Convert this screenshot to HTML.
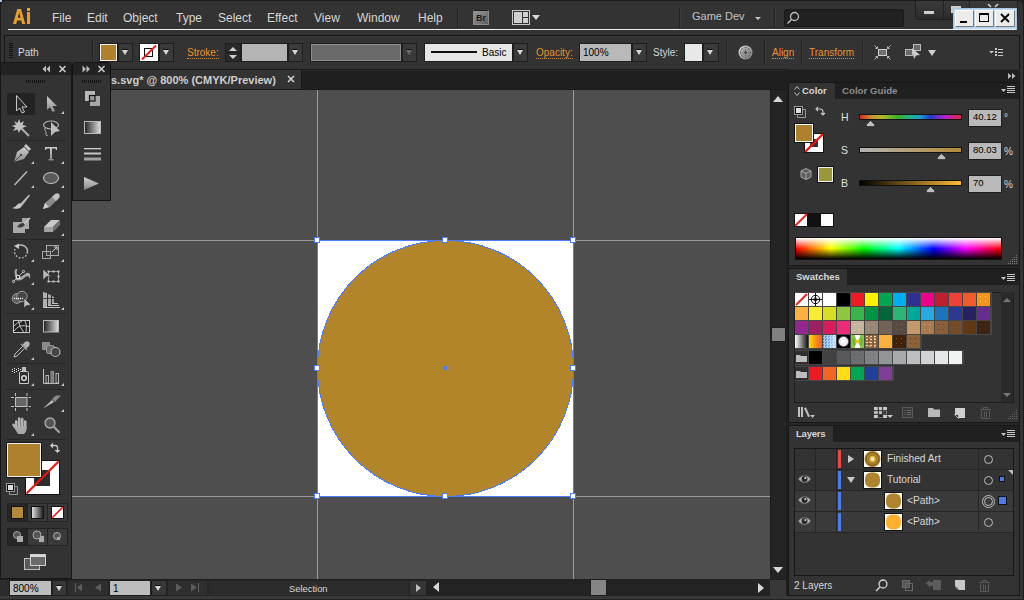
<!DOCTYPE html>
<html><head><meta charset="utf-8">
<style>
*{margin:0;padding:0;box-sizing:border-box}
html,body{width:1024px;height:600px;overflow:hidden;background:#1c1c1c;font-family:"Liberation Sans",sans-serif;font-size:12px;color:#d6d6d6}
.a{position:absolute}
.t{position:absolute;white-space:nowrap;line-height:14px}
.s10{font-size:10px}
.or{color:#e8922e}
.ul{border-bottom:1px dotted #e8922e}
.dd{position:absolute;background:#3a3a3a;border:1px solid #1e1e1e}
.dd:after{content:"";position:absolute;left:50%;top:50%;margin-left:-4px;margin-top:-3px;border-left:3.5px solid transparent;border-right:3.5px solid transparent;border-top:5px solid #d8d8d8;filter:drop-shadow(0 -1px 0 #111)}
.sd:after{margin-top:-2px}
.dis:after{border-top-color:#6a6a6a}
.tri{position:absolute;width:0;height:0;border-left:3px solid transparent;border-bottom:3px solid #cfcfcf}
svg{position:absolute;overflow:visible}
</style></head><body>
<!-- window -->
<div class="a" style="left:1px;top:1px;width:1022px;height:598px;background:#333333;border-radius:5px 5px 0 0"></div>
<div class="a" style="left:0;top:0;width:2px;height:2px;background:#9fc3e6"></div>

<!-- MENU BAR -->
<svg style="left:0;top:0" width="40" height="30"><path fill="#e89f2e" fill-rule="evenodd" d="M13 24L17.3 9H21L25.3 24H22.2L21.3 20.6H17.1L16.2 24ZM17.8 17.8H20.6L19.2 12.3Z"/><rect x="27" y="8" width="3" height="3" fill="#e89f2e"/><rect x="27" y="12" width="3" height="12" fill="#e89f2e"/></svg>
<div class="t" style="left:52px;top:11px">File</div>
<div class="t" style="left:87px;top:11px">Edit</div>
<div class="t" style="left:123px;top:11px">Object</div>
<div class="t" style="left:176px;top:11px">Type</div>
<div class="t" style="left:218px;top:11px">Select</div>
<div class="t" style="left:267px;top:11px">Effect</div>
<div class="t" style="left:314px;top:11px">View</div>
<div class="t" style="left:357px;top:11px">Window</div>
<div class="t" style="left:418px;top:11px">Help</div>
<div class="a" style="left:457px;top:8px;width:1px;height:20px;background:#222;box-shadow:1px 0 0 #3c3c3c"></div>
<div class="a" style="left:473px;top:10px;width:16px;height:15px;background:linear-gradient(135deg,#9a9a9a,#5e5e5e);border:1px solid #8a8a8a;border-top-color:#222;font-size:9px;font-weight:bold;line-height:14px;text-align:center;color:#1a1a1a">Br</div>
<div class="a" style="left:512px;top:10px;width:18px;height:15px;border:1px solid #c8c8c8;background:#333"></div>
<div class="a" style="left:514px;top:12px;width:8px;height:11px;background:#cfcfcf"></div>
<div class="a" style="left:523px;top:12px;width:5px;height:5px;background:#cfcfcf"></div>
<div class="a" style="left:523px;top:18px;width:5px;height:5px;background:#cfcfcf"></div>
<div class="a" style="left:532px;top:15px;border-left:4px solid transparent;border-right:4px solid transparent;border-top:5px solid #d8d8d8"></div>
<div class="a" style="left:679px;top:8px;width:1px;height:20px;background:#222;box-shadow:1px 0 0 #3c3c3c"></div>
<div class="t" style="left:692px;top:9px;font-size:11px;color:#c4c4c4">Game Dev</div>
<div class="a" style="left:755px;top:17px;border-left:3px solid transparent;border-right:3px solid transparent;border-top:3px solid #c8c8c8"></div>
<div class="a" style="left:774px;top:8px;width:1px;height:20px;background:#222;box-shadow:1px 0 0 #3c3c3c"></div>
<div class="a" style="left:784px;top:9px;width:120px;height:18px;background:#212121;border:1px solid #1a1a1a;border-radius:2px;box-shadow:0 1px 0 #3a3a3a"></div>
<svg style="left:786px;top:11px" width="14" height="14"><circle cx="8.5" cy="5.5" r="4" fill="none" stroke="#bdbdbd" stroke-width="1.3"/><line x1="5.5" y1="8.5" x2="1.5" y2="12.5" stroke="#bdbdbd" stroke-width="1.5"/></svg>
<div class="a" style="left:915px;top:1px;width:103px;height:19px;background:linear-gradient(#3a3a3a,#2c2c2c);border:1px solid #1e1e1e;border-top:none;border-radius:0 0 4px 4px"></div>
<div class="a" style="left:943px;top:1px;width:1px;height:18px;background:#222"></div>
<div class="a" style="left:969px;top:1px;width:1px;height:18px;background:#222"></div>
<div class="a" style="left:924px;top:11px;width:10px;height:3px;background:#cfcfcf"></div><div class="a" style="left:951px;top:6px;width:10px;height:7px;background:#cfcfcf"></div><svg style="left:987px;top:4px" width="12" height="6"><path d="M1 0L4 3M11 0L8 3" stroke="#cfcfcf" stroke-width="1.6"/></svg>
<!-- classic buttons -->
<div class="a" style="left:953px;top:8px;width:64px;height:22px;background:#bcd6ee;border:1px solid #a9c8e6"></div>
<div class="a" style="left:955px;top:10px;width:19px;height:17px;background:#ececec;border:1px solid;border-color:#fff #777 #777 #fff"></div>
<div class="a" style="left:960px;top:21px;width:7px;height:2px;background:#000"></div>
<div class="a" style="left:975px;top:10px;width:19px;height:17px;background:#ececec;border:1px solid;border-color:#fff #777 #777 #fff"></div>
<div class="a" style="left:979px;top:13px;width:10px;height:9px;border:1px solid #000;border-top-width:2px"></div>
<div class="a" style="left:995px;top:10px;width:20px;height:17px;background:#ececec;border:1px solid;border-color:#fff #777 #777 #fff"></div>
<svg style="left:1000px;top:13px" width="10" height="10"><path d="M1 1L9 9M9 1L1 9" stroke="#000" stroke-width="1.8"/></svg>
<div class="a" style="left:8px;top:29px;width:1008px;height:1px;background:#f2f2f2"></div>

<!-- CONTROL BAR -->
<div class="a" style="left:4px;top:35px;width:1016px;height:35px;background:#333;border:1px solid #161616;box-shadow:inset 0 1px 0 #3c3c3c"></div>

<div class="a" style="left:9px;top:43px;width:4px;height:16px;background:repeating-linear-gradient(#111 0 1px,#333 1px 2px)"></div>
<div class="t s10" style="left:18px;top:45.5px;color:#d8d8d8">Path</div>
<div class="a" style="left:92px;top:40px;width:1px;height:25px;background:#222;box-shadow:1px 0 0 #3a3a3a"></div>
<div class="a" style="left:99px;top:43px;width:19px;height:19px;background:#1e1e1e"></div>
<div class="a" style="left:100px;top:44px;width:17px;height:17px;background:#f0f0f0"></div>
<div class="a" style="left:101px;top:45px;width:15px;height:15px;background:#af812d"></div>
<div class="dd" style="left:118px;top:43px;width:15px;height:19px"></div>
<div class="a" style="left:139px;top:43px;width:20px;height:19px;background:#1e1e1e"></div>
<div class="a" style="left:140px;top:44px;width:18px;height:17px;background:#fff"></div>
<div class="a" style="left:144px;top:48px;width:9px;height:9px;border:1.5px solid #111"></div>
<svg style="left:140px;top:44px" width="18" height="17"><line x1="2" y1="15.5" x2="16" y2="1.5" stroke="#f01a1a" stroke-width="1.8"/></svg>
<div class="dd" style="left:159px;top:43px;width:15px;height:19px"></div>
<div class="t or s10" style="left:187px;top:45.5px"><span style="border-bottom:1px dotted #d88a2e;padding-bottom:0">Stroke:</span></div>
<div class="a" style="left:225px;top:43px;width:16px;height:19px;background:#2a2a2a;border:1px solid #1e1e1e"></div>
<div class="a" style="left:226px;top:52px;width:14px;height:1px;background:#1e1e1e"></div>
<div class="a" style="left:229px;top:47px;border-left:4px solid transparent;border-right:4px solid transparent;border-bottom:4px solid #cfcfcf"></div>
<div class="a" style="left:229px;top:55px;border-left:4px solid transparent;border-right:4px solid transparent;border-top:4px solid #cfcfcf"></div>
<div class="a" style="left:241px;top:43px;width:47px;height:19px;background:#b4b4b4;border:1px solid #1e1e1e"></div>
<div class="dd" style="left:288px;top:43px;width:15px;height:19px"></div>
<div class="a" style="left:310px;top:43px;width:92px;height:19px;background:#1e1e1e"></div>
<div class="a" style="left:311px;top:44px;width:90px;height:17px;background:#6a6a6a;border:1px solid #8e8e8e"></div>
<div class="dd dis" style="left:402px;top:43px;width:15px;height:19px;"></div>
<div class="a" style="left:424px;top:43px;width:89px;height:19px;background:#e6e6e6;border:1px solid #1e1e1e"></div>
<div class="a" style="left:431px;top:51px;width:46px;height:2px;background:#111"></div>
<div class="t s10" style="left:482px;top:45.5px;color:#000">Basic</div>
<div class="dd" style="left:513px;top:43px;width:15px;height:19px"></div>
<div class="t or s10" style="left:536px;top:45.5px"><span style="border-bottom:1px dotted #d88a2e;padding-bottom:0">Opacity:</span></div>
<div class="a" style="left:579px;top:43px;width:53px;height:19px;background:#b9b9b9;border:1px solid #1e1e1e"></div>
<div class="t s10" style="left:583px;top:45.5px;color:#000">100%</div>
<div class="dd" style="left:632px;top:43px;width:15px;height:19px"></div>
<div class="t s10" style="left:653px;top:45.5px;color:#d8d8d8">Style:</div>
<div class="a" style="left:684px;top:43px;width:19px;height:19px;background:#e8e8e8;border:1px solid #1e1e1e"></div>
<div class="dd" style="left:703px;top:43px;width:16px;height:19px"></div>
<div class="a" style="left:726px;top:40px;width:1px;height:25px;background:#222;box-shadow:1px 0 0 #3a3a3a"></div>
<svg style="left:738px;top:45px" width="15" height="15"><defs><linearGradient id="gb" x1="0" y1="0" x2="1" y2="1"><stop offset="0" stop-color="#e8e8e8"/><stop offset="1" stop-color="#777"/></linearGradient></defs><circle cx="7.5" cy="7.5" r="7" fill="url(#gb)"/><circle cx="7.5" cy="7.5" r="5" fill="none" stroke="#555" stroke-width="0.7"/><circle cx="7.5" cy="7.5" r="3" fill="none" stroke="#666" stroke-width="0.7"/><circle cx="7.5" cy="7.5" r="1.3" fill="#111"/><path d="M7.5 1V14M1 7.5H14M3 3L12 12M12 3L3 12" stroke="#666" stroke-width="0.4"/></svg>
<div class="a" style="left:764px;top:40px;width:1px;height:25px;background:#222;box-shadow:1px 0 0 #3a3a3a"></div>
<div class="t or s10" style="left:772px;top:45.5px"><span style="border-bottom:1px dotted #d88a2e;padding-bottom:0">Align</span></div>
<div class="a" style="left:801px;top:40px;width:1px;height:25px;background:#222;box-shadow:1px 0 0 #3a3a3a"></div>
<div class="t or s10" style="left:809px;top:45.5px"><span style="border-bottom:1px dotted #d88a2e;padding-bottom:0">Transform</span></div>
<div class="a" style="left:862px;top:40px;width:1px;height:25px;background:#222;box-shadow:1px 0 0 #3a3a3a"></div>
<svg style="left:874px;top:45px" width="17" height="15"><rect x="4.5" y="4.5" width="8" height="6" fill="#707070" stroke="#d0d0d0"/><g stroke="#c8c8c8" stroke-width="0.9" fill="none"><path d="M0.5 0.5L3.5 3.5M16.5 0.5L13.5 3.5M0.5 14.5L3.5 11.5M16.5 14.5L13.5 11.5"/><path d="M1.5 3.5H3.5V1.5M15.5 3.5H13.5V1.5M1.5 11.5H3.5V13.5M15.5 11.5H13.5V13.5"/></g></svg>
<svg style="left:905px;top:44px" width="18" height="16"><rect x="0.5" y="5.5" width="7" height="6" fill="#6a6a6a" stroke="#bbb"/><rect x="8.5" y="0.5" width="7" height="6" fill="#6a6a6a" stroke="#bbb"/><path d="M7 4L15 11L11 11.5L9 15Z" fill="#cfcfcf"/></svg>
<div class="a" style="left:928px;top:50px;border-left:4px solid transparent;border-right:4px solid transparent;border-top:6px solid #d0d0d0"></div>
<svg style="left:989px;top:47px" width="15" height="10"><path d="M0 4H5L2.5 6.5Z" fill="#c8c8c8"/><path d="M6 1H8V3H6ZM6 4H8V6H6ZM6 7H8V9H6Z" fill="#c8c8c8"/><path d="M9 2.5H14M9 5.5H14M9 8.5H14" stroke="#c8c8c8" stroke-width="1"/></svg>

<!-- DOC TAB STRIP -->
<div class="a" style="left:72px;top:70px;width:715px;height:20px;background:#1f1f1f;border-top:1px solid #2c2c2c;border-bottom:1px solid #191919"></div>
<div class="a" style="left:72px;top:70px;width:230px;height:19px;background:#333;border-right:1px solid #1a1a1a;box-shadow:inset 0 1px 0 #3c3c3c"></div>
<div class="t" style="left:111px;top:73px;font-size:11px;font-weight:bold;color:#cfcfcf">s.svg* @ 800% (CMYK/Preview)</div>
<svg style="left:287px;top:75px" width="8" height="8"><path d="M1 1L7 7M7 1L1 7" stroke="#d0d0d0" stroke-width="1.6"/></svg>

<!-- CANVAS -->
<div class="a" style="left:72px;top:90px;width:698px;height:489px;background:#4e4e4e"></div>
<div class="a" style="left:317px;top:90px;width:1px;height:489px;background:#9a9a9a"></div>
<div class="a" style="left:573px;top:90px;width:1px;height:489px;background:#9a9a9a"></div>
<div class="a" style="left:72px;top:240px;width:698px;height:1px;background:#9a9a9a"></div>
<div class="a" style="left:72px;top:496px;width:698px;height:1px;background:#9a9a9a"></div>
<div class="a" style="left:318px;top:241px;width:255px;height:255px;background:#fff"></div>
<svg style="left:0;top:0" width="1024" height="600">
<circle cx="445.5" cy="368.5" r="128" fill="#b2852b" stroke="#4a7cff" stroke-width="1" shape-rendering="crispEdges"/>
<rect x="317.5" y="240.5" width="256" height="256" fill="none" stroke="#4a7cff" stroke-width="1"/>
<g fill="#fff" stroke="#4a7cff" stroke-width="1">
<rect x="314.5" y="237.5" width="5" height="5"/><rect x="442.5" y="237.5" width="5" height="5"/><rect x="570.5" y="237.5" width="5" height="5"/>
<rect x="314.5" y="365.5" width="5" height="5"/><rect x="570.5" y="365.5" width="5" height="5"/>
<rect x="314.5" y="493.5" width="5" height="5"/><rect x="442.5" y="493.5" width="5" height="5"/><rect x="570.5" y="493.5" width="5" height="5"/>
</g>
<rect x="443" y="366" width="4" height="4" fill="#4a7cff"/>
</svg>

<!-- V SCROLLBAR -->
<div class="a" style="left:770px;top:90px;width:17px;height:489px;background:#242424;border-left:1px solid #1b1b1b;border-right:1px solid #1b1b1b"></div>
<div class="a" style="left:773px;top:96px;border-left:5px solid transparent;border-right:5px solid transparent;border-bottom:6px solid #d8d8d8"></div>
<div class="a" style="left:771px;top:327px;width:15px;height:15px;background:#808080;border:1px solid #1c1c1c"></div>
<div class="a" style="left:773px;top:567px;border-left:5px solid transparent;border-right:5px solid transparent;border-top:6px solid #d8d8d8"></div>
<div class="a" style="left:770px;top:579px;width:16px;height:17px;background:#383838;border-top:1px solid #1e1e1e"></div>
<div class="a" style="left:786px;top:69px;width:2px;height:527px;background:#1e1e1e"></div>

<!-- STATUS BAR -->
<div class="a" style="left:0px;top:579px;width:786px;height:17px;background:#2c2c2c;border-top:1px solid #1e1e1e"></div>
<div class="a" style="left:0px;top:596px;width:1023px;height:4px;background:#393939"></div>
<div class="a" style="left:0px;top:599px;width:1024px;height:1px;background:#222"></div>
<div class="a" style="left:9px;top:580px;width:43px;height:16px;background:#bdbdbd;border:1px solid #1e1e1e"></div>
<div class="t s10" style="left:13px;top:582px;font-size:10px;color:#000">800%</div>
<div class="dd sd" style="left:52px;top:580px;width:15px;height:16px;background:#383838"></div>
<div class="a" style="left:67px;top:580px;width:42px;height:16px;background:#2e2e2e;border:1px solid #262626"></div>
<svg style="left:75px;top:583px" width="30" height="10"><path d="M0.5 0V9" stroke="#5c5c5c" stroke-width="1.2"/><path d="M7 0.5L2 4.5L7 8.5Z" fill="#5c5c5c"/><path d="M26 0.5L20 4.5L26 8.5Z" fill="#5c5c5c"/></svg>
<div class="a" style="left:109px;top:580px;width:42px;height:16px;background:#bdbdbd;border:1px solid #1e1e1e"></div>
<div class="t s10" style="left:113px;top:582px;font-size:10px;color:#000">1</div>
<div class="dd sd" style="left:151px;top:580px;width:16px;height:16px;background:#383838"></div>
<div class="a" style="left:167px;top:580px;width:41px;height:16px;background:#2e2e2e;border:1px solid #262626"></div>
<svg style="left:175px;top:583px" width="30" height="10"><path d="M1 0.5L7 4.5L1 8.5Z" fill="#5c5c5c"/><path d="M16 0.5L22 4.5L16 8.5Z" fill="#5c5c5c"/><path d="M23.5 0V9" stroke="#5c5c5c" stroke-width="1.2"/></svg>
<div class="a" style="left:208px;top:580px;width:201px;height:16px;background:#2c2c2c;border:1px solid #262626"></div>
<div class="t s10" style="left:289px;top:582px;font-size:9.4px;color:#d8d8d8">Selection</div>
<div class="a" style="left:409px;top:580px;width:18px;height:16px;background:#353535;border:1px solid #232323"></div>
<div class="a" style="left:416px;top:584px;border-top:4px solid transparent;border-bottom:4px solid transparent;border-left:5px solid #bdbdbd"></div>
<div class="a" style="left:427px;top:579px;width:343px;height:17px;background:#232323"></div>
<div class="a" style="left:433px;top:582px;border-top:5px solid transparent;border-bottom:5px solid transparent;border-right:6px solid #d8d8d8"></div>
<div class="a" style="left:758px;top:583px;border-top:5px solid transparent;border-bottom:5px solid transparent;border-left:6px solid #d8d8d8"></div>
<div class="a" style="left:590px;top:579px;width:17px;height:17px;background:#858585;border:1px solid #1c1c1c"></div>
<div class="a" style="left:770px;top:580px;width:16px;height:16px;background:#383838"></div>

<!-- LEFT TOOLBAR -->
<div class="a" style="left:0px;top:62px;width:72px;height:517px;background:#333333;border:1px solid #161616;border-radius:3px 3px 0 0"></div>
<div class="a" style="left:1px;top:63px;width:70px;height:12px;background:#222;border-radius:3px 3px 0 0"></div>
<svg style="left:42px;top:65px" width="28" height="8"><path d="M4 0.5L0.5 4L4 7.5ZM8 0.5L4.5 4L8 7.5Z" fill="#bbb"/><path d="M17.5 1L23.5 7M23.5 1L17.5 7" stroke="#cfcfcf" stroke-width="1.5"/></svg>
<div class="a" style="left:26px;top:80px;width:20px;height:3px;background:repeating-linear-gradient(90deg,#111 0 1px,#333 1px 2px)"></div>

<!-- FLOAT PANEL -->
<div class="a" style="left:72px;top:62px;width:39px;height:139px;background:#333333;border:1px solid #141414;border-radius:3px 3px 0 0"></div>
<div class="a" style="left:73px;top:63px;width:37px;height:12px;background:#222;border-radius:3px 3px 0 0"></div>
<svg style="left:82px;top:65px" width="26" height="8"><path d="M0.5 0.5L4 4L0.5 7.5ZM4.5 0.5L8 4L4.5 7.5Z" fill="#bbb"/><path d="M16.5 1L22.5 7M22.5 1L16.5 7" stroke="#cfcfcf" stroke-width="1.5"/></svg>
<div class="a" style="left:82px;top:80px;width:20px;height:3px;background:repeating-linear-gradient(90deg,#111 0 1px,#333 1px 2px)"></div>


<!-- TOOL ICONS -->
<div class="a" style="left:7px;top:93px;width:28px;height:22px;background:#232323"></div>
<svg style="left:0;top:0" width="72" height="600">
<defs>
<linearGradient id="lg1" x1="0" y1="0" x2="0" y2="1"><stop offset="0" stop-color="#d0d0d0"/><stop offset="1" stop-color="#8a8a8a"/></linearGradient>
<linearGradient id="lg2" x1="0" y1="0" x2="1" y2="0"><stop offset="0" stop-color="#222"/><stop offset="1" stop-color="#e0e0e0"/></linearGradient>
</defs>
<g fill="#c8c8c8">
<!-- sub triangles -->
<path d="M61 114H64V111Z"/>
<path d="M31 164H34V161Z"/><path d="M61 164H64V161Z"/>
<path d="M31 188H34V185Z"/><path d="M61 188H64V185Z"/>
<path d="M61 212H64V209Z"/><path d="M61 236H64V233Z"/>
<path d="M31 262H34V259Z"/><path d="M61 262H64V259Z"/>
<path d="M31 285H34V282Z"/>
<path d="M31 310H34V307Z"/><path d="M61 310H64V307Z"/>
<path d="M31 360H34V357Z"/>
<path d="M31 386H34V383Z"/><path d="M61 386H64V383Z"/>
<path d="M61 412H64V409Z"/>
<path d="M31 436H34V433Z"/>
</g>
<!-- separators -->
<g fill="#262626"><rect x="6" y="140" width="60" height="1"/><rect x="6" y="239" width="60" height="1"/><rect x="6" y="313" width="60" height="1"/><rect x="6" y="363" width="60" height="1"/><rect x="6" y="389" width="60" height="1"/><rect x="6" y="439" width="60" height="1"/></g>
<!-- selection -->
<path d="M16.5 95.5V111L19.5 108L22 113L24.5 112L22 107H27Z" fill="#2a2a2a" stroke="#c8c8c8" stroke-width="1"/>
<!-- direct selection -->
<path d="M47 96V110L50 107L52.5 112L55 111L52.5 106H57Z" fill="url(#lg1)"/>
<!-- magic wand -->
<path d="M19 119L20.5 123L24 121L22.5 125L27 126L22.5 128L24 131L20.5 129.5L19 133L17.5 129.5L13 131L15.5 127.5L12 126L16 124.5L14 121L17.5 123Z" fill="#c0c0c0"/>
<path d="M21 128L29 136" stroke="#b0b0b0" stroke-width="2"/>
<!-- lasso -->
<ellipse cx="51" cy="125" rx="7.5" ry="4" fill="none" stroke="#b0b0b0" stroke-width="1.2"/>
<path d="M45 128C44 131 47 132 46 134C45 135.5 47 136 48 135" fill="none" stroke="#b0b0b0" stroke-width="1"/>
<path d="M51 122V136L55 132L60 131Z" fill="#bdbdbd"/>
<!-- pen -->
<path d="M14 162L17 152L24 147L29 152L24 159Z" fill="url(#lg1)"/>
<path d="M24 146L26 144L31 149L29 151Z" fill="#c8c8c8"/>
<circle cx="21" cy="155" r="1" fill="#222"/><path d="M14 162L20.5 155.5" stroke="#333" stroke-width="0.8"/>
<!-- type -->
<path d="M45 147H57V150H56L55.5 148.5H52V159H53.5V160.5H48.5V159H50V148.5H46.5L46 150H45Z" fill="url(#lg1)"/>
<!-- line -->
<path d="M14.5 185L27 171.5" stroke="#c0c0c0" stroke-width="1.3"/>
<!-- ellipse -->
<ellipse cx="51" cy="178" rx="7.5" ry="5.5" fill="#5a5a5a" stroke="#c0c0c0" stroke-width="1.1"/>
<!-- brush -->
<path d="M20 204L29 194.5L30 195.5L22 206Z" fill="#b8b8b8"/>
<path d="M12 208C15 208 17 204 20 203L22 206C20 209 15 209.5 12 208Z" fill="#c8c8c8"/>
<!-- pencil -->
<path d="M43 209L45 203L54 195L58 199L50 207Z" fill="#8a8a8a"/>
<path d="M52 197L55 194C56 193 58 193 59 194C60 195 60 197 59 198L56 201Z" fill="#c0c0c0"/>
<path d="M43 209L45 203L49 207Z" fill="#d0d0d0"/>
<!-- blob brush -->
<path d="M13 222H22V218H29V229L25 229V233H13Z" fill="#a8a8a8"/>
<path d="M17 227C20 223 23 222 25 224C24 227 21 228 17 227Z" fill="#3a3a3a"/>
<path d="M24 224L30 218" stroke="#c8c8c8" stroke-width="1.5"/>
<!-- eraser -->
<path d="M44 227L51 220H60L53 227Z" fill="#c8c8c8"/>
<path d="M44 227H53V232H44Z" fill="#a0a0a0"/>
<path d="M53 227L60 220V225L53 232Z" fill="#707070"/>
<!-- rotate -->
<path d="M17 246.5A6.5 6.5 0 0 1 27.5 252" fill="none" stroke="#b8b8b8" stroke-width="1.5"/>
<path d="M27.5 252A6.5 6.5 0 1 1 15 249" fill="none" stroke="#b0b0b0" stroke-width="1.5" stroke-dasharray="1.8 1.6"/>
<path d="M14 246L19 243.5V249Z" fill="#c8c8c8"/>
<!-- scale -->
<rect x="46.5" y="245.5" width="12" height="10" fill="#3a3a3a" stroke="#a8a8a8"/>
<rect x="42.5" y="251.5" width="8" height="7" fill="none" stroke="#a8a8a8"/>
<path d="M52 252L57 247M54 247H57V250" stroke="#d0d0d0" fill="none"/>
<!-- puppet warp -->
<path d="M14.5 271.5Q15 268 17.5 269.5Q16 271 17 274Q18 277 20 277Q23 276 25 274Q28 271.5 30 274Q30.5 276 30 279Q29 276 27 276Q25 277 23 279Q20 281 17 280.5Q15 279 14.5 271.5Z" fill="#a8a8a8"/>
<path d="M13.5 281.5L23.5 271.5" stroke="#d0d0d0" stroke-width="0.9"/>
<circle cx="18" cy="277" r="1.7" fill="#333" stroke="#e0e0e0" stroke-width="1.1"/>
<circle cx="13.5" cy="281.5" r="1.1" fill="#333" stroke="#d8d8d8" stroke-width="0.9"/>
<circle cx="23.5" cy="271.5" r="1.1" fill="#333" stroke="#d8d8d8" stroke-width="0.9"/>
<!-- free transform -->
<rect x="48.5" y="271.5" width="10" height="10" fill="none" stroke="#b8b8b8" stroke-width="0.8"/>
<g fill="#c8c8c8"><rect x="47.5" y="270.5" width="2" height="2"/><rect x="52.5" y="270.5" width="2" height="2"/><rect x="57.5" y="270.5" width="2" height="2"/><rect x="57.5" y="275.5" width="2" height="2"/><rect x="47.5" y="280.5" width="2" height="2"/><rect x="52.5" y="280.5" width="2" height="2"/><rect x="57.5" y="280.5" width="2" height="2"/></g>
<path d="M43 269V280L46.5 276.5L51 276.5Z" fill="#b8b8b8" stroke="#222" stroke-width="0.5"/>
<!-- shape builder -->
<circle cx="17" cy="298.5" r="4.8" fill="#5a5a5a" stroke="#a8a8a8"/>
<circle cx="22" cy="296.5" r="5.2" fill="#474747" stroke="#a0a0a0"/>
<g fill="#f0f0f0"><circle cx="14.5" cy="298.5" r="0.75"/><circle cx="16.5" cy="298.5" r="0.75"/><circle cx="18.5" cy="298.5" r="0.75"/><circle cx="20.5" cy="298.5" r="0.75"/><circle cx="22.5" cy="298.5" r="0.75"/></g>
<path d="M24 298V308L26.5 305.5L31 305Z" fill="#c0c0c0" stroke="#222" stroke-width="0.5"/>
<!-- perspective grid -->
<path d="M43 292L47 293V308H43Z" fill="#b0b0b0"/><path d="M48 294L51 295V305H48Z" fill="#a8a8a8"/><path d="M52 296L54 297V303H52Z" fill="#a0a0a0"/>
<path d="M43 298.5H55" stroke="#2a2a2a" stroke-width="0.8"/>
<path d="M52 303.5H58M48 305.5H59M43 307.5H60" stroke="#c0c0c0" stroke-width="1"/>
<!-- mesh -->
<rect x="13.5" y="320.5" width="16" height="12" fill="#222" stroke="#c8c8c8"/>
<path d="M14 326Q17 322 22 321.5M14 331Q17 327 20 326Q24 325 29 326.5M18.5 321Q19 326 23.5 332M25 321Q27.5 325 26 332" fill="none" stroke="#d0d0d0" stroke-width="0.9"/>
<!-- gradient -->
<rect x="43.5" y="320.5" width="15" height="11.5" fill="url(#lg2)" stroke="#b8b8b8"/>
<!-- eyedropper -->
<path d="M14 357L15 354L23 346L25 348L17 356Z" fill="none" stroke="#c0c0c0" stroke-width="1"/>
<path d="M22 345L25 342C26 341 28 341 29 342C30 343 30 345 29 346L26 349Z" fill="#b0b0b0"/>
<path d="M21 344L27 350" stroke="#909090" stroke-width="1.5"/>
<!-- blend -->
<rect x="42" y="342" width="8" height="8" fill="#8a8a8a"/>
<rect x="46.5" y="345.5" width="8" height="8" rx="2" fill="#666" stroke="#a0a0a0"/>
<circle cx="55.5" cy="352" r="4.5" fill="#444" stroke="#b8b8b8" stroke-width="1.1"/>
<!-- symbol sprayer -->
<g fill="#e8e8e8"><rect x="14" y="368" width="1" height="1"/><rect x="18" y="368" width="1" height="1"/><rect x="12" y="369" width="1" height="1"/><rect x="16" y="369" width="1" height="1"/><rect x="20" y="369" width="1" height="1"/><rect x="14" y="370" width="1" height="1"/><rect x="18" y="370" width="1" height="1"/><rect x="12" y="371" width="1" height="1"/><rect x="16" y="371" width="1" height="1"/><rect x="14" y="372" width="1" height="1"/></g>
<rect x="22" y="367" width="4" height="4" fill="#c0c0c0"/>
<path d="M19.5 383.5V373Q19.5 372 20.5 371.5H27.5Q28.5 372 28.5 373V383.5Z" fill="#2e2e2e" stroke="#c8c8c8"/>
<circle cx="24" cy="378" r="2.3" fill="#222" stroke="#d8d8d8" stroke-width="1.5"/>
<!-- graph -->
<path d="M43.5 369V383.5H59" fill="none" stroke="#c0c0c0"/>
<rect x="46" y="375.5" width="2.5" height="7.5" fill="none" stroke="#c0c0c0" stroke-width="0.9"/>
<rect x="51" y="371.5" width="2.5" height="11.5" fill="#777" stroke="#999" stroke-width="0.9"/>
<rect x="56" y="373.5" width="2.5" height="9.5" fill="none" stroke="#c0c0c0" stroke-width="0.9"/>
<!-- artboard -->
<rect x="15.5" y="397.5" width="11.5" height="9" fill="#666" stroke="#c0c0c0"/>
<path d="M15.5 393V396M27 393V396M15.5 408V411M27 408V411M11 397.5H14M28.5 397.5H31M11 406.5H14M28.5 406.5H31" stroke="#c0c0c0"/>
<!-- slice -->
<path d="M43 408.5L52 400L54 402Z" fill="#c0c0c0"/>
<path d="M52 399L56 395.5H61L55 402Z" fill="#8a8a8a"/>
<!-- hand -->
<g stroke="#b4b4b4" stroke-width="2.6" stroke-linecap="round"><path d="M16.2 427V421.5M19.2 427V418.5M22.2 427V419M25.2 428V421.5M13.5 425L17 429.5"/></g>
<path d="M15 426H26.5V429C26.5 431.5 25 433 24 434H18L15.5 430Z" fill="#a8a8a8"/>
<!-- zoom -->
<circle cx="50" cy="423" r="5" fill="#555" stroke="#b0b0b0" stroke-width="1.3"/>
<path d="M54 427L59 432" stroke="#a0a0a0" stroke-width="2.2" stroke-linecap="round"/>
<!-- fill/stroke -->
<rect x="25" y="460" width="35" height="35" fill="#111"/>
<rect x="26" y="461" width="33" height="33" fill="#fff"/>
<rect x="34" y="470" width="16" height="16" fill="#2c2c2c"/>
<line x1="26.5" y1="493.5" x2="58.5" y2="461.5" stroke="#f01010" stroke-width="2.2"/>
<rect x="6" y="442" width="36" height="36" fill="#111"/>
<rect x="7" y="443" width="34" height="34" fill="#f2f2f2"/>
<rect x="8" y="444" width="32" height="32" fill="#ad812e"/>
<path d="M51 445.5H55.5Q57.5 445.5 57.5 447.5V451" fill="none" stroke="#c8c8c8" stroke-width="1.3"/><path d="M50 445.5L53 442.5V448.5Z M57.5 453L54.5 450H60.5Z" fill="#c8c8c8"/>
<rect x="6.5" y="483.5" width="8" height="8" fill="#111" stroke="#9a9a9a"/><rect x="8" y="485" width="5" height="5" fill="#ddd"/><path d="M9.5 492V494.5H17.5V486.5H15" fill="none" stroke="#9a9a9a"/>
<!-- mode buttons -->
<rect x="7" y="503" width="61" height="19" fill="#222"/>
<rect x="8" y="504" width="19" height="17" fill="#262626"/>
<rect x="28" y="504" width="19" height="17" fill="#3a3a3a"/>
<rect x="48" y="504" width="19" height="17" fill="#3a3a3a"/>
<rect x="11" y="506" width="13" height="13" fill="#111"/><rect x="12" y="507" width="11" height="11" fill="#b38a3c"/>
<rect x="31" y="506" width="13" height="13" fill="#111"/><rect x="32" y="507" width="11" height="11" fill="url(#lg2)" transform="rotate(180 37.5 512.5)"/>
<rect x="51" y="506" width="13" height="13" fill="#111"/><rect x="52" y="507" width="11" height="11" fill="#fff"/><line x1="52" y1="518" x2="63" y2="507" stroke="#f01010" stroke-width="1.6"/>
<rect x="7" y="528" width="61" height="18" fill="#222"/>
<rect x="8" y="529" width="19" height="16" fill="#262626"/>
<rect x="28" y="529" width="19" height="16" fill="#3a3a3a"/>
<rect x="48" y="529" width="19" height="16" fill="#3a3a3a"/>
<circle cx="17" cy="535" r="3.5" fill="#555" stroke="#aaa"/><rect x="17" y="536" width="6" height="6" fill="#aaa"/>
<rect x="39" y="536" width="5" height="6" fill="#aaa"/><circle cx="37" cy="535" r="4" fill="#555" stroke="#aaa"/>
<circle cx="57" cy="536" r="3.5" fill="#555" stroke="#aaa"/><rect x="57" y="537" width="3" height="3" fill="#aaa"/>
<!-- screen mode -->
<rect x="24.5" y="458.5" width="0" height="0"/>
<rect x="24.5" y="558.5" width="15" height="11" fill="#5a5a5a" stroke="#c0c0c0"/>
<rect x="30.5" y="554.5" width="15" height="11" fill="#6a6a6a" stroke="#d0d0d0"/>
<rect x="31" y="555" width="14" height="2" fill="#d8d8d8"/>
</svg>
<!-- float panel icons -->
<svg style="left:73px;top:62px" width="38" height="139">
<rect x="12" y="29" width="10" height="10" fill="#b8b8b8"/><rect x="17" y="34" width="10" height="10" fill="#a8a8a8"/><rect x="16.5" y="33.5" width="5.5" height="5.5" fill="#999" stroke="#141414" stroke-width="1.2"/>
<rect x="11.5" y="59.5" width="16" height="12" fill="url(#lg2)" stroke="#b8b8b8"/>
<rect x="11" y="86" width="17" height="1.3" fill="#d0d0d0"/><rect x="11" y="90.5" width="17" height="2" fill="#c8c8c8"/><rect x="11" y="95.5" width="17" height="3" fill="#a0a0a0"/>
<path d="M11 115V128L26 121.5Z" fill="url(#lg1)"/>
</svg>

<!-- DOCK -->
<div class="a" style="left:788px;top:69px;width:232px;height:13px;background:#1f1f1f;border-top:1px solid #2a2a2a"></div>
<svg style="left:1008px;top:73px" width="8" height="6"><path d="M0 0L3.5 3L0 6ZM4 0L7.5 3L4 6Z" fill="#bbb"/></svg>
<!-- color panel -->
<div class="a" style="left:788px;top:82px;width:232px;height:184px;background:#333333;border:1px solid #171717"></div>
<div class="a" style="left:789px;top:83px;width:230px;height:16px;background:#202020"></div>
<div class="a" style="left:789px;top:83px;width:46px;height:16px;background:#333333"></div>
<div class="a" style="left:835px;top:83px;width:1px;height:16px;background:#1e1e1e"></div>
<div class="a" style="left:905px;top:83px;width:1px;height:16px;background:#1e1e1e"></div>
<svg style="left:794px;top:85px" width="6" height="12"><path d="M0.5 4.5L3 1.5L5.5 4.5M0.5 7.5L3 10.5L5.5 7.5" fill="none" stroke="#bbb" stroke-width="1"/></svg>
<div class="t" style="left:802px;top:84px;font-size:9.5px;font-weight:bold;color:#d8d8d8">Color</div>
<div class="t" style="left:842px;top:84px;font-size:9.7px;font-weight:bold;color:#8c8c8c">Color Guide</div>
<svg style="left:1001px;top:86px" width="15" height="10"><path d="M0 3H5L2.5 6Z" fill="#c8c8c8"/><path d="M6 0.5H14M6 2.5H14M6 4.5H14M6 6.5H14" stroke="#c8c8c8" stroke-width="1"/></svg>
<!-- color panel content -->
<svg style="left:790px;top:100px" width="40" height="20"><rect x="4.5" y="6.5" width="8" height="8" fill="#111" stroke="#9a9a9a"/><rect x="6" y="8" width="5" height="5" fill="#ddd"/><path d="M7.5 15V17.5H15.5V9.5H13" fill="none" stroke="#9a9a9a"/><path d="M26 9H30Q33 9 33 12V15M28 7L26 9L28 11M31 13L33 15L35 13" fill="none" stroke="#c8c8c8" stroke-width="1.1"/></svg>
<div class="a" style="left:804px;top:133px;width:20px;height:20px;background:#fff;border:1px solid #111"></div>
<div class="a" style="left:810px;top:139px;width:8px;height:8px;background:#333"></div>
<svg style="left:805px;top:134px" width="18" height="18"><line x1="0" y1="18" x2="18" y2="0" stroke="#ff0a0a" stroke-width="2.2"/></svg>
<div class="a" style="left:794px;top:123px;width:20px;height:20px;background:#fff;border:1px solid #111"></div>
<div class="a" style="left:796px;top:125px;width:16px;height:16px;background:#af812d"></div>
<svg style="left:800px;top:168px" width="12" height="12"><path d="M6 0.5L11 3V9L6 11.5L1 9V3Z" fill="#5a5a5a" stroke="#aaa"/><path d="M1 3L6 5.5L11 3M6 5.5V11.5" fill="none" stroke="#aaa"/></svg>
<div class="a" style="left:818px;top:167px;width:15px;height:15px;background:#9b9738;border:1px solid #f0f0f0;box-shadow:0 0 0 1px #111"></div>
<div class="a" style="left:794px;top:213px;width:40px;height:14px;background:#111"></div>
<div class="a" style="left:795px;top:214px;width:12px;height:12px;background:#fff"></div>
<svg style="left:795px;top:214px" width="12" height="12"><line x1="0" y1="12" x2="12" y2="0" stroke="#f01a1a" stroke-width="1.8"/></svg>
<div class="a" style="left:821px;top:214px;width:12px;height:12px;background:#fff"></div>
<div class="t" style="left:841px;top:110px;font-size:10.5px;color:#e0e0e0">H</div>
<div class="t" style="left:841px;top:143px;font-size:10.5px;color:#e0e0e0">S</div>
<div class="t" style="left:841px;top:176px;font-size:10.5px;color:#e0e0e0">B</div>
<div class="a" style="left:859px;top:114px;width:103px;height:6px;background:#111"></div>
<div class="a" style="left:860px;top:115px;width:101px;height:4px;background:linear-gradient(90deg,#d82a2a,#c8962e 12%,#b0b828 22%,#38b030 38%,#20b0a0 52%,#2098d0 60%,#2238c8 70%,#7830c8 78%,#c020c0 86%,#d82a3a)"></div>
<div class="a" style="left:859px;top:147px;width:103px;height:6px;background:#111"></div>
<div class="a" style="left:860px;top:148px;width:101px;height:4px;background:linear-gradient(90deg,#b3b3b3,#b38a38)"></div>
<div class="a" style="left:859px;top:180px;width:103px;height:6px;background:#111"></div>
<div class="a" style="left:860px;top:181px;width:101px;height:4px;background:linear-gradient(90deg,#000,#ffba3a)"></div>
<svg style="left:866px;top:120px" width="9" height="7"><path d="M0.5 6.5V4.5L4.5 0.5L8.5 4.5V6.5Z" fill="#bdbdbd" stroke="#222" stroke-width="0.6"/></svg>
<svg style="left:937px;top:153px" width="9" height="7"><path d="M0.5 6.5V4.5L4.5 0.5L8.5 4.5V6.5Z" fill="#bdbdbd" stroke="#222" stroke-width="0.6"/></svg>
<svg style="left:926px;top:186px" width="9" height="7"><path d="M0.5 6.5V4.5L4.5 0.5L8.5 4.5V6.5Z" fill="#bdbdbd" stroke="#222" stroke-width="0.6"/></svg>
<div class="a" style="left:968px;top:109px;width:34px;height:18px;background:#b9b9b9;border:1px solid #1e1e1e"></div>
<div class="a" style="left:968px;top:142px;width:34px;height:18px;background:#b9b9b9;border:1px solid #1e1e1e"></div>
<div class="a" style="left:968px;top:175px;width:34px;height:18px;background:#b9b9b9;border:1px solid #1e1e1e"></div>
<div class="t" style="left:973px;top:110px;font-size:9.5px;color:#000">40.12</div>
<div class="t" style="left:973px;top:143px;font-size:9.5px;color:#000">80.03</div>
<div class="t" style="left:973px;top:176px;font-size:9.5px;color:#000">70</div>
<div class="t" style="left:1004px;top:111px;font-size:10px;color:#d8d8d8">&deg;</div>
<div class="t" style="left:1004px;top:144.5px;font-size:10px;color:#d8d8d8">%</div>
<div class="t" style="left:1004px;top:177.5px;font-size:10px;color:#d8d8d8">%</div>
<div class="a" style="left:795px;top:237px;width:207px;height:23px;background:#111"></div>
<div class="a" style="left:796px;top:238px;width:205px;height:21px;background:linear-gradient(180deg,rgba(255,255,255,1) 0%,rgba(255,255,255,0) 50%,rgba(0,0,0,0) 50%,rgba(0,0,0,1) 100%),linear-gradient(90deg,#f00,#ff0 17%,#0f0 33%,#0ff 50%,#00f 67%,#f0f 83%,#f00)"></div>
<svg style="left:1008px;top:255px" width="10" height="10"><g fill="#777"><rect x="8" y="0" width="1" height="1"/><rect x="6" y="2" width="1" height="1"/><rect x="8" y="2" width="1" height="1"/><rect x="4" y="4" width="1" height="1"/><rect x="6" y="4" width="1" height="1"/><rect x="8" y="4" width="1" height="1"/><rect x="2" y="6" width="1" height="1"/><rect x="4" y="6" width="1" height="1"/><rect x="6" y="6" width="1" height="1"/><rect x="8" y="6" width="1" height="1"/><rect x="0" y="8" width="1" height="1"/><rect x="2" y="8" width="1" height="1"/><rect x="4" y="8" width="1" height="1"/><rect x="6" y="8" width="1" height="1"/><rect x="8" y="8" width="1" height="1"/></g></svg>

<!-- swatches panel -->
<div class="a" style="left:788px;top:266px;width:232px;height:2px;background:#262626"></div>
<div class="a" style="left:788px;top:268px;width:232px;height:155px;background:#333333;border:1px solid #171717"></div>
<div class="a" style="left:789px;top:269px;width:230px;height:16px;background:#202020"></div>
<div class="a" style="left:789px;top:269px;width:58px;height:16px;background:#333333"></div>
<div class="a" style="left:847px;top:269px;width:1px;height:16px;background:#1e1e1e"></div>
<div class="t" style="left:796px;top:270px;font-size:9.5px;font-weight:bold;color:#d8d8d8">Swatches</div>
<svg style="left:1001px;top:274px" width="15" height="10"><path d="M0 3H5L2.5 6Z" fill="#c8c8c8"/><path d="M6 0.5H14M6 2.5H14M6 4.5H14M6 6.5H14" stroke="#c8c8c8" stroke-width="1"/></svg>
<div class="a" style="left:794px;top:292px;width:220px;height:111px;background:#333;border:1px solid #1e1e1e"></div>
<div class="a" style="left:1001px;top:292px;width:12px;height:110px;background:#2a2a2a"></div>
<div class="a" style="left:1003px;top:298px;border-left:4px solid transparent;border-right:4px solid transparent;border-bottom:4px solid #777"></div>
<div class="a" style="left:1003px;top:393px;border-left:4px solid transparent;border-right:4px solid transparent;border-top:4px solid #777"></div>
<div class="a" style="left:795px;top:292px;width:197px;height:43px;background:#474747"></div><div class="a" style="left:795px;top:334px;width:127px;height:15px;background:#474747"></div>
<div class="a" style="left:795px;top:293px;width:13px;height:13px;background:#fff"></div><svg style="left:795px;top:293px" width="13" height="13"><line x1="1" y1="12" x2="12" y2="1" stroke="#f01a1a" stroke-width="1.8"/></svg>
<div class="a" style="left:809px;top:293px;width:13px;height:13px;background:#fff"></div><svg style="left:809px;top:293px" width="13" height="13"><circle cx="6.5" cy="6.5" r="4.2" fill="none" stroke="#111"/><circle cx="6.5" cy="6.5" r="1.6" fill="none" stroke="#111"/><path d="M6.5 0V13M0 6.5H13" stroke="#111"/></svg>
<div class="a" style="left:823px;top:293px;width:13px;height:13px;background:#ffffff"></div>
<div class="a" style="left:837px;top:293px;width:13px;height:13px;background:#000000"></div>
<div class="a" style="left:851px;top:293px;width:13px;height:13px;background:#ed1c24"></div>
<div class="a" style="left:865px;top:293px;width:13px;height:13px;background:#fff200"></div>
<div class="a" style="left:879px;top:293px;width:13px;height:13px;background:#00a651"></div>
<div class="a" style="left:893px;top:293px;width:13px;height:13px;background:#00aeef"></div>
<div class="a" style="left:907px;top:293px;width:13px;height:13px;background:#2e3192"></div>
<div class="a" style="left:921px;top:293px;width:13px;height:13px;background:#ec008c"></div>
<div class="a" style="left:935px;top:293px;width:13px;height:13px;background:#be1e2d"></div>
<div class="a" style="left:949px;top:293px;width:13px;height:13px;background:#ef4136"></div>
<div class="a" style="left:963px;top:293px;width:13px;height:13px;background:#f15a29"></div>
<div class="a" style="left:977px;top:293px;width:13px;height:13px;background:radial-gradient(circle,#ffe040 0.4px,transparent 0.8px) 1px 1px/5px 5px,#f7941d"></div>
<div class="a" style="left:795px;top:307px;width:13px;height:13px;background:#fbb040"></div>
<div class="a" style="left:809px;top:307px;width:13px;height:13px;background:#f9ed32"></div>
<div class="a" style="left:823px;top:307px;width:13px;height:13px;background:#d7df23"></div>
<div class="a" style="left:837px;top:307px;width:13px;height:13px;background:#8dc63f"></div>
<div class="a" style="left:851px;top:307px;width:13px;height:13px;background:#39b54a"></div>
<div class="a" style="left:865px;top:307px;width:13px;height:13px;background:#009444"></div>
<div class="a" style="left:879px;top:307px;width:13px;height:13px;background:#006838"></div>
<div class="a" style="left:893px;top:307px;width:13px;height:13px;background:#2bb673"></div>
<div class="a" style="left:907px;top:307px;width:13px;height:13px;background:#00a79d"></div>
<div class="a" style="left:921px;top:307px;width:13px;height:13px;background:#27aae1"></div>
<div class="a" style="left:935px;top:307px;width:13px;height:13px;background:#1c75bc"></div>
<div class="a" style="left:949px;top:307px;width:13px;height:13px;background:#2b3990"></div>
<div class="a" style="left:963px;top:307px;width:13px;height:13px;background:#262262"></div>
<div class="a" style="left:977px;top:307px;width:13px;height:13px;background:#662d91"></div>
<div class="a" style="left:795px;top:321px;width:13px;height:13px;background:#92278f"></div>
<div class="a" style="left:809px;top:321px;width:13px;height:13px;background:#9e1f63"></div>
<div class="a" style="left:823px;top:321px;width:13px;height:13px;background:#da1c5c"></div>
<div class="a" style="left:837px;top:321px;width:13px;height:13px;background:#ee2a7b"></div>
<div class="a" style="left:851px;top:321px;width:13px;height:13px;background:radial-gradient(circle,#e8dcc0 0.4px,transparent 0.8px) 1px 1px/5px 5px,#c2b59b"></div>
<div class="a" style="left:865px;top:321px;width:13px;height:13px;background:radial-gradient(circle,#b8a898 0.4px,transparent 0.8px) 1px 1px/5px 5px,#998675"></div>
<div class="a" style="left:879px;top:321px;width:13px;height:13px;background:#736357"></div>
<div class="a" style="left:893px;top:321px;width:13px;height:13px;background:radial-gradient(circle,#7a6a60 0.4px,transparent 0.8px) 1px 1px/5px 5px,#594a42"></div>
<div class="a" style="left:907px;top:321px;width:13px;height:13px;background:#c49a6c"></div>
<div class="a" style="left:921px;top:321px;width:13px;height:13px;background:radial-gradient(circle,#d8a868 0.4px,transparent 0.8px) 1px 1px/5px 5px,#a97c50"></div>
<div class="a" style="left:935px;top:321px;width:13px;height:13px;background:radial-gradient(circle,#5a3a20 0.4px,transparent 0.8px) 1px 1px/5px 5px,#8b5e3c"></div>
<div class="a" style="left:949px;top:321px;width:13px;height:13px;background:#754c29"></div>
<div class="a" style="left:963px;top:321px;width:13px;height:13px;background:#603913"></div>
<div class="a" style="left:977px;top:321px;width:13px;height:13px;background:radial-gradient(circle,#a02020 0.4px,transparent 0.8px) 1px 1px/5px 5px,#3c2415"></div>
<div class="a" style="left:795px;top:335px;width:13px;height:13px;background:linear-gradient(90deg,#fff,#111)"></div>
<div class="a" style="left:809px;top:335px;width:13px;height:13px;background:linear-gradient(90deg,#ffe000,#f7931e,#f15a24)"></div>
<div class="a" style="left:823px;top:335px;width:13px;height:13px;background:conic-gradient(rgba(255,255,255,.5) 25%,transparent 0 50%,rgba(255,255,255,.5) 0 75%,transparent 0) 0 0/3px 3px,linear-gradient(90deg,#3a8ad8,#c0dcf4)"></div>
<div class="a" style="left:837px;top:335px;width:13px;height:13px;background:radial-gradient(circle,#fff 0,#e8e8e8 45%,#000 62%)"></div>
<div class="a" style="left:851px;top:335px;width:13px;height:13px;background:radial-gradient(ellipse at 50% 0,#fff 25%,transparent 30%),radial-gradient(ellipse at 50% 100%,#fff 25%,transparent 30%),radial-gradient(circle,#f0c020 15%,#5cb83a 40%,#8cc63f 70%)"></div>
<div class="a" style="left:865px;top:335px;width:13px;height:13px;background:radial-gradient(circle,#e8d8c0 0.7px,transparent 1.2px) 0 0/4px 3px,radial-gradient(circle,#c8a070 0.7px,transparent 1.2px) 2px 1px/5px 4px,#8a5a30"></div>
<div class="a" style="left:879px;top:335px;width:13px;height:13px;background:#fbb03b"></div>
<div class="a" style="left:893px;top:335px;width:13px;height:13px;background:radial-gradient(circle,#7a4a20 0.4px,transparent 0.8px) 1px 1px/5px 5px,#42210b"></div>
<div class="a" style="left:907px;top:335px;width:13px;height:13px;background:radial-gradient(circle,#5a3a18 0.4px,transparent 0.8px) 1px 1px/5px 5px,#8c6239"></div>
<div class="a" style="left:795px;top:350px;width:169px;height:15px;background:#474747"></div>
<div class="a" style="left:795px;top:351px;width:13px;height:13px;background:#2f2f2f"></div><svg style="left:795px;top:351px" width="13" height="13"><path d="M1 4H5L6 5H12V11H1Z" fill="#bdbdbd"/></svg>
<div class="a" style="left:809px;top:351px;width:13px;height:13px;background:#000000"></div>
<div class="a" style="left:823px;top:351px;width:13px;height:13px;background:#414042"></div>
<div class="a" style="left:837px;top:351px;width:13px;height:13px;background:#58595b"></div>
<div class="a" style="left:851px;top:351px;width:13px;height:13px;background:radial-gradient(circle,#5a5a5a 0.4px,transparent 0.8px) 1px 1px/5px 5px,#6d6e71"></div>
<div class="a" style="left:865px;top:351px;width:13px;height:13px;background:radial-gradient(circle,#6a6a6a 0.4px,transparent 0.8px) 1px 1px/5px 5px,#808285"></div>
<div class="a" style="left:879px;top:351px;width:13px;height:13px;background:#939598"></div>
<div class="a" style="left:893px;top:351px;width:13px;height:13px;background:#a7a9ac"></div>
<div class="a" style="left:907px;top:351px;width:13px;height:13px;background:#bcbec0"></div>
<div class="a" style="left:921px;top:351px;width:13px;height:13px;background:#d1d3d4"></div>
<div class="a" style="left:935px;top:351px;width:13px;height:13px;background:#e6e7e8"></div>
<div class="a" style="left:949px;top:351px;width:13px;height:13px;background:#f1f2f2"></div>
<div class="a" style="left:795px;top:366px;width:99px;height:15px;background:#474747"></div>
<div class="a" style="left:795px;top:367px;width:13px;height:13px;background:#2f2f2f"></div><svg style="left:795px;top:367px" width="13" height="13"><path d="M1 4H5L6 5H12V11H1Z" fill="#bdbdbd"/></svg>
<div class="a" style="left:809px;top:367px;width:13px;height:13px;background:#ed1c24"></div>
<div class="a" style="left:823px;top:367px;width:13px;height:13px;background:#f26522"></div>
<div class="a" style="left:837px;top:367px;width:13px;height:13px;background:#ffde17"></div>
<div class="a" style="left:851px;top:367px;width:13px;height:13px;background:#00a651"></div>
<div class="a" style="left:865px;top:367px;width:13px;height:13px;background:#21409a"></div>
<div class="a" style="left:879px;top:367px;width:13px;height:13px;background:#7f3f98"></div>
<!-- swatch icons -->
<svg style="left:797px;top:405px" width="200" height="14"><g fill="#c0c0c0"><rect x="1" y="2" width="2" height="10"/><rect x="4" y="2" width="2" height="10"/><path d="M7 3L9 2.5L13 11.5L11 12Z"/><path d="M13 10H18L15.5 13Z"/></g>
<rect x="77" y="2" width="13" height="11" fill="#c8c8c8"/><path d="M81.3 2V13M85.6 2V13M77 5.7H90M77 9.3H90" stroke="#2a2a2a" stroke-width="1"/><rect x="82" y="10" width="3" height="2.5" fill="#222"/><rect x="86.3" y="6.3" width="3" height="2.5" fill="#222"/><path d="M90 10H96L93 13Z" fill="#c8c8c8"/>
<rect x="105.5" y="2.5" width="10" height="10" fill="#3a3a3a" stroke="#5a5a5a"/><path d="M107.5 5.5H108.5M107.5 7.5H108.5M107.5 9.5H108.5M110 5.5H114M110 7.5H114M110 9.5H114" stroke="#666"/>
<path d="M131 3H136L137 4.5H143V12H131Z" fill="#b8b8b8"/>
<path d="M158 3H168V13H162L158 9Z" fill="#cfcfcf"/><path d="M157.5 9.5L161.5 9.5L161.5 13.5Z" fill="#333" stroke="#cfcfcf" stroke-width="0.8"/>
<g stroke="#5a5a5a" fill="none" stroke-width="1"><path d="M183 4.5H194M186.5 4.5V2.5H190.5V4.5M184.5 5.5V13.5H192.5V5.5M187.5 6.5V12.5M189.5 6.5V12.5"/></g>
</svg>
<svg style="left:1008px;top:410px" width="10" height="10"><g fill="#666"><rect x="8" y="0" width="1" height="1"/><rect x="6" y="2" width="1" height="1"/><rect x="8" y="2" width="1" height="1"/><rect x="4" y="4" width="1" height="1"/><rect x="6" y="4" width="1" height="1"/><rect x="8" y="4" width="1" height="1"/><rect x="2" y="6" width="1" height="1"/><rect x="4" y="6" width="1" height="1"/><rect x="6" y="6" width="1" height="1"/><rect x="8" y="6" width="1" height="1"/><rect x="0" y="8" width="1" height="1"/><rect x="2" y="8" width="1" height="1"/><rect x="4" y="8" width="1" height="1"/><rect x="6" y="8" width="1" height="1"/><rect x="8" y="8" width="1" height="1"/></g></svg>

<!-- layers panel -->
<div class="a" style="left:788px;top:423px;width:232px;height:2px;background:#262626"></div>
<div class="a" style="left:788px;top:425px;width:232px;height:171px;background:#333333;border:1px solid #171717"></div>
<div class="a" style="left:789px;top:426px;width:230px;height:16px;background:#202020"></div>
<div class="a" style="left:789px;top:426px;width:44px;height:16px;background:#333333"></div>
<div class="a" style="left:833px;top:426px;width:1px;height:16px;background:#1e1e1e"></div>
<div class="t" style="left:796px;top:427px;font-size:9.5px;font-weight:bold;letter-spacing:-0.2px;color:#d8d8d8">Layers</div>
<svg style="left:1001px;top:430px" width="15" height="10"><path d="M0 3H5L2.5 6Z" fill="#c8c8c8"/><path d="M6 0.5H14M6 2.5H14M6 4.5H14M6 6.5H14" stroke="#c8c8c8" stroke-width="1"/></svg>
<div class="a" style="left:794px;top:448px;width:220px;height:128px;background:#333333;border:1px solid #171717"></div>
<div class="a" style="left:795px;top:449px;width:218px;height:21px;background:#333333;border-bottom:1px solid #262626"></div>
<div class="a" style="left:815px;top:449px;width:1px;height:21px;background:#262626"></div>
<div class="a" style="left:836px;top:449px;width:1px;height:21px;background:#262626"></div>
<div class="a" style="left:978px;top:449px;width:1px;height:21px;background:#262626"></div>
<div class="a" style="left:795px;top:470px;width:218px;height:21px;background:#333333;border-bottom:1px solid #262626"></div>
<div class="a" style="left:815px;top:470px;width:1px;height:21px;background:#262626"></div>
<div class="a" style="left:836px;top:470px;width:1px;height:21px;background:#262626"></div>
<div class="a" style="left:978px;top:470px;width:1px;height:21px;background:#262626"></div>
<div class="a" style="left:795px;top:491px;width:218px;height:21px;background:#3a3a3a;border-bottom:1px solid #262626"></div>
<div class="a" style="left:815px;top:491px;width:1px;height:21px;background:#262626"></div>
<div class="a" style="left:836px;top:491px;width:1px;height:21px;background:#262626"></div>
<div class="a" style="left:978px;top:491px;width:1px;height:21px;background:#262626"></div>
<div class="a" style="left:795px;top:512px;width:218px;height:21px;background:#3a3a3a;border-bottom:1px solid #262626"></div>
<div class="a" style="left:815px;top:512px;width:1px;height:21px;background:#262626"></div>
<div class="a" style="left:836px;top:512px;width:1px;height:21px;background:#262626"></div>
<div class="a" style="left:978px;top:512px;width:1px;height:21px;background:#262626"></div><div class="a" style="left:838px;top:450px;width:3px;height:18px;background:#e84848"></div>
<div class="a" style="left:838px;top:471px;width:3px;height:18px;background:#4d7be8"></div>
<div class="a" style="left:838px;top:492px;width:3px;height:18px;background:#4d7be8"></div>
<div class="a" style="left:838px;top:513px;width:3px;height:18px;background:#4d7be8"></div>
<svg style="left:797px;top:473px" width="16" height="12"><path d="M1.5 6C4 1.5 11 1.5 13.5 6C11 10.5 4 10.5 1.5 6Z" fill="#b8b8b8" stroke="#707070" stroke-width="0.8"/><circle cx="7.5" cy="6" r="3" fill="#2a2a2a"/><circle cx="8.4" cy="5" r="1" fill="#ddd"/></svg>
<svg style="left:797px;top:494px" width="16" height="12"><path d="M1.5 6C4 1.5 11 1.5 13.5 6C11 10.5 4 10.5 1.5 6Z" fill="#b8b8b8" stroke="#707070" stroke-width="0.8"/><circle cx="7.5" cy="6" r="3" fill="#2a2a2a"/><circle cx="8.4" cy="5" r="1" fill="#ddd"/></svg>
<svg style="left:797px;top:515px" width="16" height="12"><path d="M1.5 6C4 1.5 11 1.5 13.5 6C11 10.5 4 10.5 1.5 6Z" fill="#b8b8b8" stroke="#707070" stroke-width="0.8"/><circle cx="7.5" cy="6" r="3" fill="#2a2a2a"/><circle cx="8.4" cy="5" r="1" fill="#ddd"/></svg>
<div class="a" style="left:848px;top:455px;border-top:4px solid transparent;border-bottom:4px solid transparent;border-left:6px solid #c8c8c8"></div>
<div class="a" style="left:847px;top:477px;border-left:4px solid transparent;border-right:4px solid transparent;border-top:6px solid #c8c8c8"></div>
<div class="a" style="left:863px;top:450px;width:19px;height:18px;background:#fff;border:1px solid #111"></div><svg style="left:863px;top:450px" width="19" height="18"><circle cx="9.5" cy="9" r="8" fill="#b0842e"/><circle cx="9.5" cy="9" r="6.5" fill="none" stroke="#6a4a14" stroke-width="0.8"/><circle cx="9.5" cy="9" r="4" fill="#e8b030" stroke="#6a4a14" stroke-width="0.6"/><circle cx="9.5" cy="9" r="1.8" fill="#fff"/></svg>
<div class="a" style="left:863px;top:471px;width:19px;height:18px;background:#fff;border:1px solid #111"></div><svg style="left:863px;top:471px" width="19" height="18"><rect x="2" y="1.5" width="15" height="15" rx="6" fill="#b0842e"/></svg>
<div class="a" style="left:884px;top:492px;width:19px;height:18px;background:#fff;border:1px solid #111"></div><svg style="left:884px;top:492px" width="19" height="18"><rect x="2" y="1.5" width="15" height="15" rx="6" fill="#b0842e"/></svg>
<div class="a" style="left:884px;top:513px;width:19px;height:18px;background:#fff;border:1px solid #111"></div><svg style="left:884px;top:513px" width="19" height="18"><rect x="2" y="1.5" width="15" height="15" rx="6" fill="#fbb030"/></svg>
<div class="t" style="left:887px;top:452px;font-size:10.2px;color:#d8d8d8">Finished Art</div>
<div class="t" style="left:887px;top:473px;font-size:10.2px;color:#d8d8d8">Tutorial</div>
<div class="t" style="left:907px;top:494px;font-size:10.2px;color:#d8d8d8">&lt;Path&gt;</div>
<div class="t" style="left:907px;top:515px;font-size:10.2px;color:#d8d8d8">&lt;Path&gt;</div>
<svg style="left:983px;top:454px" width="11" height="11"><circle cx="5.5" cy="5.5" r="4" fill="none" stroke="#bdbdbd" stroke-width="1"/></svg>
<svg style="left:983px;top:475px" width="11" height="11"><circle cx="5.5" cy="5.5" r="4" fill="none" stroke="#bdbdbd" stroke-width="1"/></svg>
<svg style="left:983px;top:517px" width="11" height="11"><circle cx="5.5" cy="5.5" r="4" fill="none" stroke="#bdbdbd" stroke-width="1"/></svg>
<svg style="left:981px;top:494px" width="15" height="15"><circle cx="7.5" cy="7.5" r="6" fill="none" stroke="#bdbdbd" stroke-width="1"/><circle cx="7.5" cy="7.5" r="4" fill="none" stroke="#bdbdbd" stroke-width="1"/></svg>
<div class="a" style="left:999px;top:476px;width:6px;height:6px;background:#4d7be8;border:1px solid #111"></div>
<div class="a" style="left:998px;top:496px;width:9px;height:9px;background:#4d7be8;border:1px solid #111"></div>
<svg style="left:1008px;top:470px" width="5" height="5"><path d="M0 0H5V5Z" fill="#bdbdbd"/></svg>
<div class="t" style="left:794px;top:579px;font-size:10px;color:#d8d8d8">2 Layers</div>
<svg style="left:875px;top:579px" width="120" height="14"><circle cx="8" cy="5" r="4" fill="none" stroke="#cfcfcf" stroke-width="1.3"/><path d="M5 8L1 12" stroke="#cfcfcf" stroke-width="1.6"/>
<rect x="27.5" y="1.5" width="7" height="7" fill="#555" stroke="#6a6a6a"/><rect x="30.5" y="4.5" width="7" height="7" fill="none" stroke="#6a6a6a"/>
<path d="M51 4L55 1V3H58V1H66V11H58V7H55V9Z" fill="#5c5c5c"/>
<path d="M80 1H90V11H84L80 7Z" fill="#c8c8c8"/><path d="M80 8L83 11V8Z" fill="#888"/>
<g stroke="#5a5a5a" fill="none" stroke-width="1"><path d="M104 3.5H115M107.5 3.5V1.5H111.5V3.5M105.5 4.5V12.5H113.5V4.5M108.5 5.5V11.5M110.5 5.5V11.5"/></g>
</svg>
</body></html>
